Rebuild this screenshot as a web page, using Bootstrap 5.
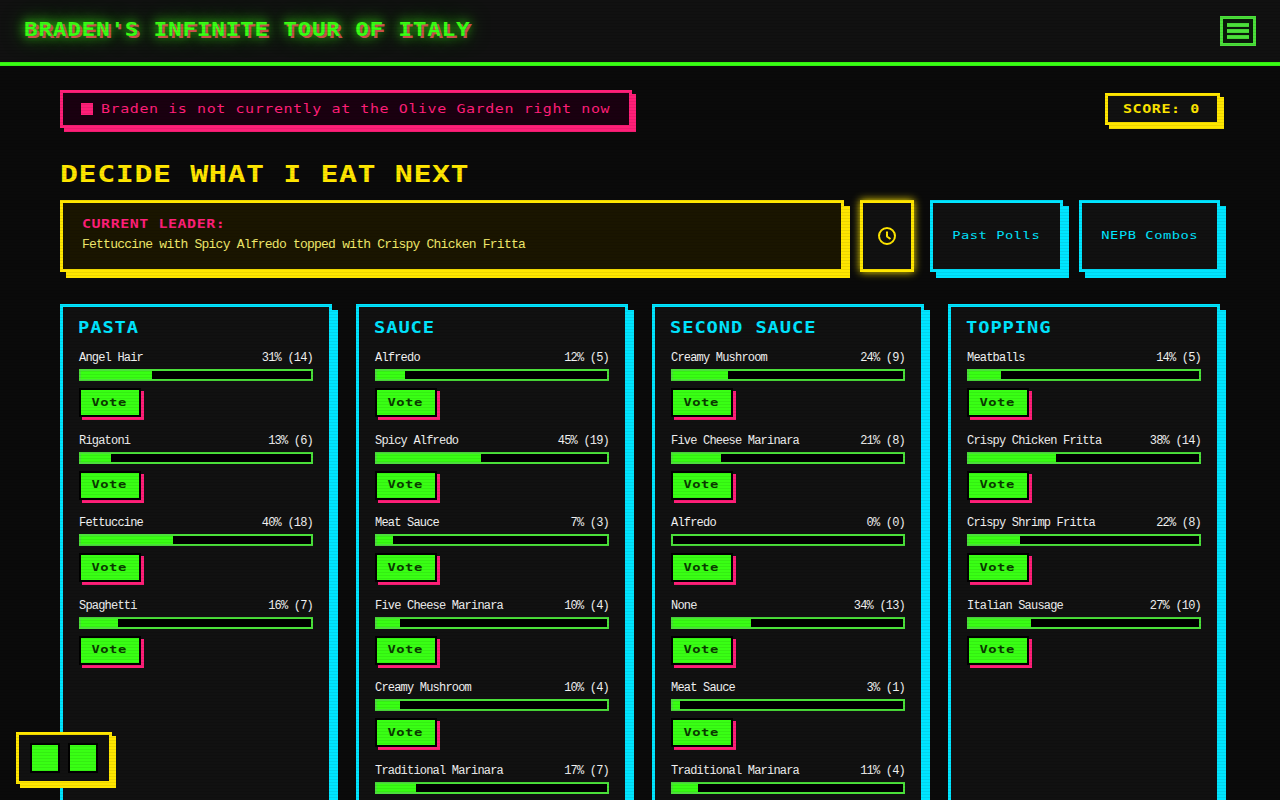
<!DOCTYPE html>
<html lang="en">
<head>
<meta charset="utf-8">
<title>Braden's Infinite Tour of Italy</title>
<link rel="stylesheet" href="https://cdn.jsdelivr.net/npm/bootstrap@5.3.0/dist/css/bootstrap.min.css">
<style>
:root{--g:#39ff14;--p:#ff1f78;--y:#ffe600;--c:#00e5ff;}
body{background:#0a0a0a;color:#fff;font-family:"Liberation Mono",monospace;}
.px{font-family:"DejaVu Sans Mono",monospace;white-space:nowrap;}
.wx{display:inline-block;transform:scaleX(1.25);transform-origin:0 50%;}
.wc{display:inline-block;transform:scaleX(1.25);transform-origin:50% 50%;}
.scan{position:fixed;inset:0;z-index:50;pointer-events:none;background:repeating-linear-gradient(180deg,transparent 0 2px,rgba(0,0,0,.07) 2px 3px);}
.topbar{height:66px;background:#111;border-bottom:4px solid var(--g);padding:0 24px;}
.brand{margin:0 0 4px;font-size:19px;font-weight:700;letter-spacing:.56px;color:var(--g);text-shadow:2px 2px 0 #c8504a,0 0 10px var(--g),0 0 20px rgba(57,255,20,.6);}
.brand .wx{transform:scaleX(1.2);}
.burger{width:36px;height:30px;padding:4px 4px;border:3px solid #4be03a;border-radius:0;background:#0a1a0a;gap:2px;}
.burger span{display:block;width:22px;height:4px;background:#4be03a;}
.page{padding:24px 60px 40px;}
.status{width:572px;height:38px;padding:0 18px;border:3px solid var(--p);background:#1a0010;box-shadow:4px 4px 0 var(--p);color:var(--p);font-size:12px;letter-spacing:.46px;gap:8px;}
.dot{width:12px;height:12px;background:var(--p);flex:none;}
.score{width:115px;height:32px;padding:0 15px;border:3px solid var(--y);background:#111;box-shadow:4px 4px 0 var(--y);color:var(--y);font-size:12px;font-weight:700;letter-spacing:.46px;}
.head{margin:36px 0 16px;height:20px;line-height:20px;font-size:23px;font-weight:700;letter-spacing:.46px;color:var(--y);}
.head .wx{transform:scaleX(1.3);}
.leader{width:784px;height:72px;padding:0 19px 4px;border:3px solid var(--y);background:#1a1500;box-shadow:6px 6px 0 var(--y);}
.leadlab{font-size:12px;font-weight:700;letter-spacing:.42px;color:var(--p);line-height:16px;margin-bottom:5px;}
.leadtxt{font-size:13px;letter-spacing:-.77px;color:#f0e86a;line-height:16px;}
.clock{width:54px;height:72px;border:3px solid var(--y);border-radius:0;background:#111;box-shadow:0 0 8px var(--y);padding:0;}
.clock:hover,.clock:focus{background:#111;border-color:var(--y);}
.linkb{height:72px;border:3px solid var(--c);border-radius:0;background:#111;color:var(--c);box-shadow:6px 6px 0 var(--c);font-family:"DejaVu Sans Mono",monospace;font-size:11px;letter-spacing:.42px;padding:0;}
.linkb:hover{background:#111;color:var(--c);border-color:var(--c);}
.w1{width:133px;}.w2{width:141px;}
.board{margin-top:32px;}
.panel{height:100%;padding:11px 16px 16px;border:3px solid var(--c);background:#111;box-shadow:6px 6px 0 var(--c);}
.ptitle{margin:0 0 11px -1px;font-size:15px;line-height:20px;font-weight:700;letter-spacing:.73px;color:var(--c);}
.opt{margin-bottom:14.5px;}
.lab{height:18px;line-height:18px;margin-bottom:2px;font-size:12px;letter-spacing:-.8px;color:#f2f2f2;}
.track{height:12px;border:2px solid #4be03a;background:#000;margin-bottom:7px;}
.fill{height:100%;background:var(--g);}
.vote{display:block;width:62px;height:29px;padding:1px 2px 0 0;border:2px solid #000;border-radius:0;background:var(--g);color:#0a3a00;box-shadow:3px 3px 0 var(--p);font-family:"DejaVu Sans Mono",monospace;font-size:11px;font-weight:700;letter-spacing:.42px;}
.vote:hover{background:var(--g);color:#0a3a00;border-color:#000;}
.player{position:fixed;left:16px;top:732px;z-index:40;padding:8px 11px;border:3px solid var(--y);background:#111;box-shadow:4px 4px 0 var(--y);gap:8px;}
.pbtn{width:30px;height:30px;padding:0;border:2px solid #000;border-radius:0;background:var(--g);}
.pbtn:hover{background:var(--g);border-color:#000;}
</style>
</head>
<body>
<div class="scan"></div>
<header class="topbar d-flex align-items-center justify-content-between">
  <h1 class="brand px"><span class="wx">BRADEN'S INFINITE TOUR OF ITALY</span></h1>
  <button class="btn burger d-flex flex-column justify-content-center align-items-center" type="button" aria-label="Menu"><span></span><span></span><span></span></button>
</header>
<main class="page">
  <div class="d-flex justify-content-between align-items-center">
    <div class="status px d-flex align-items-center"><span class="dot"></span><span class="wx">Braden is not currently at the Olive Garden right now</span></div>
    <div class="score px d-flex align-items-center"><span class="wx">SCORE: 0</span></div>
  </div>
  <h2 class="head px"><span class="wx">DECIDE WHAT I EAT NEXT</span></h2>
  <div class="d-flex gap-3">
    <div class="leader d-flex flex-column justify-content-center">
      <div class="leadlab px"><span class="wx">CURRENT LEADER:</span></div>
      <div class="leadtxt">Fettuccine with Spicy Alfredo topped with Crispy Chicken Fritta</div>
    </div>
    <button class="btn clock d-flex align-items-center justify-content-center" type="button" aria-label="History">
      <svg width="18" height="18" viewBox="0 0 18 18" fill="none" stroke="#ffe600" stroke-width="2"><circle cx="9" cy="9" r="8"/><path d="M9 4.5V9.5L12.5 12"/></svg>
    </button>
    <button class="btn linkb w1" type="button"><span class="wc">Past Polls</span></button>
    <button class="btn linkb w2" type="button"><span class="wc">NEPB Combos</span></button>
  </div>
  <div class="row gx-4 board">
    <div class="col-3"><section class="panel">
      <h3 class="ptitle px"><span class="wx">PASTA</span></h3>
      <div class="opt"><div class="lab d-flex justify-content-between"><span>Angel Hair</span><span>31% (14)</span></div><div class="track"><div class="fill" style="width:31%"></div></div><button class="btn vote" type="button"><span class="wc">Vote</span></button></div>
      <div class="opt"><div class="lab d-flex justify-content-between"><span>Rigatoni</span><span>13% (6)</span></div><div class="track"><div class="fill" style="width:13%"></div></div><button class="btn vote" type="button"><span class="wc">Vote</span></button></div>
      <div class="opt"><div class="lab d-flex justify-content-between"><span>Fettuccine</span><span>40% (18)</span></div><div class="track"><div class="fill" style="width:40%"></div></div><button class="btn vote" type="button"><span class="wc">Vote</span></button></div>
      <div class="opt"><div class="lab d-flex justify-content-between"><span>Spaghetti</span><span>16% (7)</span></div><div class="track"><div class="fill" style="width:16%"></div></div><button class="btn vote" type="button"><span class="wc">Vote</span></button></div>
    </section></div>
    <div class="col-3"><section class="panel">
      <h3 class="ptitle px"><span class="wx">SAUCE</span></h3>
      <div class="opt"><div class="lab d-flex justify-content-between"><span>Alfredo</span><span>12% (5)</span></div><div class="track"><div class="fill" style="width:12%"></div></div><button class="btn vote" type="button"><span class="wc">Vote</span></button></div>
      <div class="opt"><div class="lab d-flex justify-content-between"><span>Spicy Alfredo</span><span>45% (19)</span></div><div class="track"><div class="fill" style="width:45%"></div></div><button class="btn vote" type="button"><span class="wc">Vote</span></button></div>
      <div class="opt"><div class="lab d-flex justify-content-between"><span>Meat Sauce</span><span>7% (3)</span></div><div class="track"><div class="fill" style="width:7%"></div></div><button class="btn vote" type="button"><span class="wc">Vote</span></button></div>
      <div class="opt"><div class="lab d-flex justify-content-between"><span>Five Cheese Marinara</span><span>10% (4)</span></div><div class="track"><div class="fill" style="width:10%"></div></div><button class="btn vote" type="button"><span class="wc">Vote</span></button></div>
      <div class="opt"><div class="lab d-flex justify-content-between"><span>Creamy Mushroom</span><span>10% (4)</span></div><div class="track"><div class="fill" style="width:10%"></div></div><button class="btn vote" type="button"><span class="wc">Vote</span></button></div>
      <div class="opt"><div class="lab d-flex justify-content-between"><span>Traditional Marinara</span><span>17% (7)</span></div><div class="track"><div class="fill" style="width:17%"></div></div><button class="btn vote" type="button"><span class="wc">Vote</span></button></div>
    </section></div>
    <div class="col-3"><section class="panel">
      <h3 class="ptitle px"><span class="wx">SECOND SAUCE</span></h3>
      <div class="opt"><div class="lab d-flex justify-content-between"><span>Creamy Mushroom</span><span>24% (9)</span></div><div class="track"><div class="fill" style="width:24%"></div></div><button class="btn vote" type="button"><span class="wc">Vote</span></button></div>
      <div class="opt"><div class="lab d-flex justify-content-between"><span>Five Cheese Marinara</span><span>21% (8)</span></div><div class="track"><div class="fill" style="width:21%"></div></div><button class="btn vote" type="button"><span class="wc">Vote</span></button></div>
      <div class="opt"><div class="lab d-flex justify-content-between"><span>Alfredo</span><span>0% (0)</span></div><div class="track"><div class="fill" style="width:0%"></div></div><button class="btn vote" type="button"><span class="wc">Vote</span></button></div>
      <div class="opt"><div class="lab d-flex justify-content-between"><span>None</span><span>34% (13)</span></div><div class="track"><div class="fill" style="width:34%"></div></div><button class="btn vote" type="button"><span class="wc">Vote</span></button></div>
      <div class="opt"><div class="lab d-flex justify-content-between"><span>Meat Sauce</span><span>3% (1)</span></div><div class="track"><div class="fill" style="width:3%"></div></div><button class="btn vote" type="button"><span class="wc">Vote</span></button></div>
      <div class="opt"><div class="lab d-flex justify-content-between"><span>Traditional Marinara</span><span>11% (4)</span></div><div class="track"><div class="fill" style="width:11%"></div></div><button class="btn vote" type="button"><span class="wc">Vote</span></button></div>
    </section></div>
    <div class="col-3"><section class="panel">
      <h3 class="ptitle px"><span class="wx">TOPPING</span></h3>
      <div class="opt"><div class="lab d-flex justify-content-between"><span>Meatballs</span><span>14% (5)</span></div><div class="track"><div class="fill" style="width:14%"></div></div><button class="btn vote" type="button"><span class="wc">Vote</span></button></div>
      <div class="opt"><div class="lab d-flex justify-content-between"><span>Crispy Chicken Fritta</span><span>38% (14)</span></div><div class="track"><div class="fill" style="width:38%"></div></div><button class="btn vote" type="button"><span class="wc">Vote</span></button></div>
      <div class="opt"><div class="lab d-flex justify-content-between"><span>Crispy Shrimp Fritta</span><span>22% (8)</span></div><div class="track"><div class="fill" style="width:22%"></div></div><button class="btn vote" type="button"><span class="wc">Vote</span></button></div>
      <div class="opt"><div class="lab d-flex justify-content-between"><span>Italian Sausage</span><span>27% (10)</span></div><div class="track"><div class="fill" style="width:27%"></div></div><button class="btn vote" type="button"><span class="wc">Vote</span></button></div>
    </section></div>
  </div>
</main>
<div class="player d-flex">
  <button class="btn pbtn" type="button" aria-label="Previous"></button>
  <button class="btn pbtn" type="button" aria-label="Pause"></button>
</div>
<script src="https://cdn.jsdelivr.net/npm/bootstrap@5.3.0/dist/js/bootstrap.bundle.min.js"></script>
</body>
</html>
